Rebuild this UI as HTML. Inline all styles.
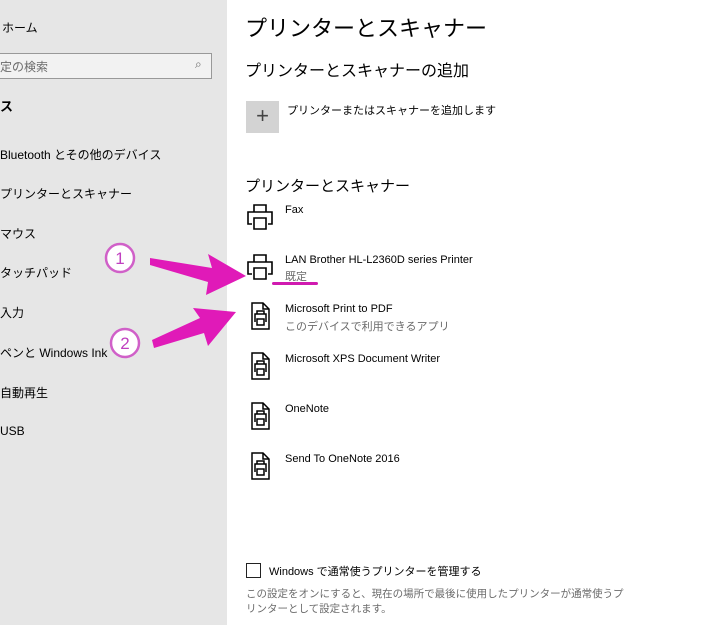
<!DOCTYPE html>
<html><head><meta charset="utf-8"><style>
*{margin:0;padding:0;box-sizing:border-box}
body{width:720px;height:625px;overflow:hidden;background:#fff;position:relative;font-family:"Liberation Sans","Noto Sans CJK JP",sans-serif;color:#000}
.side{position:absolute;left:0;top:0;width:227px;height:625px;background:#e6e6e6}
.a{position:absolute;white-space:nowrap}
.s{font-size:12px}
.g{color:#6b6b6b}
svg.p{position:absolute}
</style></head><body>
<div class="side"></div>
<div class="a s" style="left:2px;top:19px">ホーム</div>
<div class="a" style="left:-2px;top:53px;width:214px;height:26px;border:1px solid #999;background:#f2f2f2"></div>
<div class="a s g" style="left:0;top:58px">定の検索</div>
<div class="a g" style="left:195px;top:57px;font-size:12px">⌕</div>
<div class="a" style="left:0;top:96px;font-size:13px;font-weight:bold">ス</div>
<div class="a s" style="left:0;top:146px">Bluetooth とその他のデバイス</div>
<div class="a s" style="left:0;top:185px">プリンターとスキャナー</div>
<div class="a s" style="left:0;top:225px">マウス</div>
<div class="a s" style="left:0;top:264px">タッチパッド</div>
<div class="a s" style="left:0;top:304px">入力</div>
<div class="a s" style="left:0;top:344px">ペンと Windows Ink</div>
<div class="a s" style="left:0;top:384px">自動再生</div>
<div class="a s" style="left:0;top:424px">USB</div>

<div class="a" style="left:245px;top:11px;font-size:22px">プリンターとスキャナー</div>
<div class="a" style="left:245px;top:57px;font-size:16px">プリンターとスキャナーの追加</div>
<div class="a" style="left:246px;top:101px;width:33px;height:32px;background:#d3d3d3;text-align:center;font-size:22px;line-height:30px;color:#444;font-weight:300">+</div>
<div class="a s" style="left:287px;top:102px;font-size:11px">プリンターまたはスキャナーを追加します</div>
<div class="a" style="left:245px;top:175px;font-size:15px">プリンターとスキャナー</div>

<svg class="p" style="left:246px;top:203px" width="28" height="28" viewBox="0 0 28 28" fill="none" stroke="#000" stroke-width="1.6"><path d="M8 9V2h12v7M6 21H2V9h24v12h-4M8 15h12v11H8z"/></svg>
<div class="a s" style="left:285px;top:204px;font-size:11px">Fax</div>
<svg class="p" style="left:246px;top:253px" width="28" height="28" viewBox="0 0 28 28" fill="none" stroke="#000" stroke-width="1.6"><path d="M8 9V2h12v7M6 21H2V9h24v12h-4M8 15h12v11H8z"/></svg>
<div class="a s" style="left:285px;top:254px;font-size:11px">LAN Brother HL-L2360D series Printer</div>
<div class="a s g" style="left:285px;top:268px;font-size:11px">既定</div>
<div class="a" style="left:272px;top:282px;width:46px;height:3px;background:#d01ab0;border-radius:2px"></div>

<svg width="0" height="0" style="position:absolute"><defs><g id="d" fill="none" stroke="#000" stroke-width="1.5"><path d="M2 1h11l6 6v20H2z"/><path d="M13 1v6h6"/><path d="M7 12v-3h7v3M5 20v-8h11v8M7 17h7v6H7z"/></g></defs></svg>
<svg class="p" style="left:250px;top:302px" width="22" height="29"><use href="#d"/></svg>
<div class="a s" style="left:285px;top:303px;font-size:11px">Microsoft Print to PDF</div>
<div class="a s g" style="left:285px;top:318px;font-size:11px">このデバイスで利用できるアプリ</div>
<svg class="p" style="left:250px;top:352px" width="22" height="29"><use href="#d"/></svg>
<div class="a s" style="left:285px;top:353px;font-size:11px">Microsoft XPS Document Writer</div>
<svg class="p" style="left:250px;top:402px" width="22" height="29"><use href="#d"/></svg>
<div class="a s" style="left:285px;top:403px;font-size:11px">OneNote</div>
<svg class="p" style="left:250px;top:452px" width="22" height="29"><use href="#d"/></svg>
<div class="a s" style="left:285px;top:453px;font-size:11px">Send To OneNote 2016</div>

<div class="a" style="left:246px;top:563px;width:15px;height:15px;border:1.5px solid #222"></div>
<div class="a s" style="left:269px;top:563px;font-size:11px">Windows で通常使うプリンターを管理する</div>
<div class="a g" style="left:246px;top:587px;font-size:10.5px;line-height:15px;white-space:normal;width:380px">この設定をオンにすると、現在の場所で最後に使用したプリンターが通常使うプリンターとして設定されます。</div>

<svg class="p" style="left:0;top:0" width="720" height="625">
<g fill="#e01ab8">
<path d="M150 258 L212 268 L208 254 L246 276 L206 295 L208 282 L150 265 Z"/>
<path d="M152 340 L200 318 L193 308 L236 312 L208 346 L204 333 L154 348 Z"/>
</g>
<g fill="#fff" stroke="#d060c8" stroke-width="2.5">
<circle cx="120" cy="258" r="14"/><circle cx="125" cy="343" r="14"/>
</g>
<g font-family="Liberation Sans,sans-serif" font-size="17" fill="#c040c0" text-anchor="middle">
<text x="120" y="264">1</text><text x="125" y="349">2</text></g>
</svg>
</body></html>
